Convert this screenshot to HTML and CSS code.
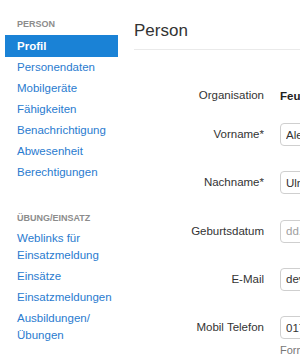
FILE: index.html
```html
<!DOCTYPE html>
<html lang="de">
<head>
<meta charset="utf-8">
<title>Person</title>
<link rel="stylesheet" href="styles.css">
</head>
<body>
<div class="layout">
  <aside class="sidebar">
    <div class="nav-header first">PERSON</div>
    <ul class="nav">
      <li><a class="active" href="#">Profil</a></li>
      <li><a href="#">Personendaten</a></li>
      <li><a href="#">Mobilgeräte</a></li>
      <li><a href="#">Fähigkeiten</a></li>
      <li><a href="#">Benachrichtigung</a></li>
      <li><a href="#">Abwesenheit</a></li>
      <li><a href="#">Berechtigungen</a></li>
    </ul>
    <div class="nav-header">ÜBUNG/EINSATZ</div>
    <ul class="nav">
      <li><a href="#">Weblinks für Einsatzmeldung</a></li>
      <li><a href="#">Einsätze</a></li>
      <li><a href="#">Einsatzmeldungen</a></li>
      <li><a href="#">Ausbildungen/ Übungen</a></li>
    </ul>
  </aside>
  <main class="main">
    <h1 class="title">Person</h1>
    <form class="form">
      <div class="row static-row">
        <label class="label">Organisation</label>
        <div class="control"><span class="static">Feuerwehr Musterstadt</span></div>
      </div>
      <div class="row">
        <label class="label">Vorname*</label>
        <div class="control"><input class="input" type="text" value="Alexander"></div>
      </div>
      <div class="row">
        <label class="label">Nachname*</label>
        <div class="control"><input class="input" type="text" value="Ulrich"></div>
      </div>
      <div class="row">
        <label class="label">Geburtsdatum</label>
        <div class="control"><input class="input" type="text" placeholder="dd.mm.yyyy"></div>
      </div>
      <div class="row">
        <label class="label">E-Mail</label>
        <div class="control"><input class="input" type="text" value="dev@example.com"></div>
      </div>
      <div class="row">
        <label class="label">Mobil Telefon</label>
        <div class="control"><input class="input" type="text" value="0171 1234567"></div>
      </div>
      <div class="help-row">
        <span class="help">Format: +49 171 1234567</span>
      </div>
    </form>
  </main>
</div>
</body>
</html>
```

FILE: styles.css
```css
html, body {
  margin: 0;
  padding: 0;
  background: #fff;
  overflow: hidden;
}
body {
  font-family: "Liberation Sans", Arial, sans-serif;
  color: #333;
  width: 300px;
  height: 359px;
}
.layout {
  display: flex;
  width: 600px;
}
.sidebar {
  box-sizing: border-box;
  flex: 0 0 118px;
  width: 118px;
  min-width: 0;
  padding-left: 5px;
}
.nav-header {
  font-size: 9px;
  line-height: 12px;
  font-weight: bold;
  color: #8c8c8c;
  padding-left: 12px;
  margin-top: 29px;
  margin-bottom: 4px;
}
.nav-header.first {
  margin-top: 18px;
  margin-bottom: 5px;
}
.nav {
  list-style: none;
  margin: 0;
  padding: 0;
}
.nav a {
  display: block;
  padding: 2px 0 2px 12px;
  font-size: 11.5px;
  line-height: 17px;
  color: #2a7bcf;
  text-decoration: none;
}
.nav a.active {
  background: #1a82d6;
  color: #fff;
  font-weight: bold;
  padding-top: 3px;
  padding-bottom: 2px;
}
.main {
  flex: 1 1 auto;
  min-width: 0;
  padding-left: 16px;
}
.title {
  margin: 21px 0 0;
  font-size: 17px;
  line-height: 20px;
  font-weight: normal;
  color: #333;
  padding-bottom: 8px;
  border-bottom: 1px solid #eaeaea;
}
.form {
  margin-top: 34px;
  display: flex;
  flex-direction: column;
}
.row {
  display: flex;
  align-items: center;
  height: 23px;
  margin-bottom: 25.3px;
}
.static-row {
  margin-bottom: 16px;
}
.label {
  flex: 0 0 130px;
  text-align: right;
  font-size: 11.5px;
  line-height: 17px;
  color: #333;
}
.control {
  margin-left: 16px;
  display: flex;
}
.static {
  font-size: 11.5px;
  font-weight: bold;
  color: #222;
  white-space: nowrap;
}
.input {
  box-sizing: border-box;
  width: 220px;
  height: 23px;
  border: 1px solid #cfcfcf;
  border-radius: 4px;
  padding: 0 5px;
  font-family: "Liberation Sans", Arial, sans-serif;
  font-size: 11.5px;
  color: #333;
  background: #fff;
}
.input::placeholder {
  color: #a0a0a0;
}
.help-row {
  margin-top: -24.8px;
  padding-left: 146px;
}
.help {
  font-size: 11px;
  line-height: 13px;
  color: #777;
  white-space: nowrap;
}
```
